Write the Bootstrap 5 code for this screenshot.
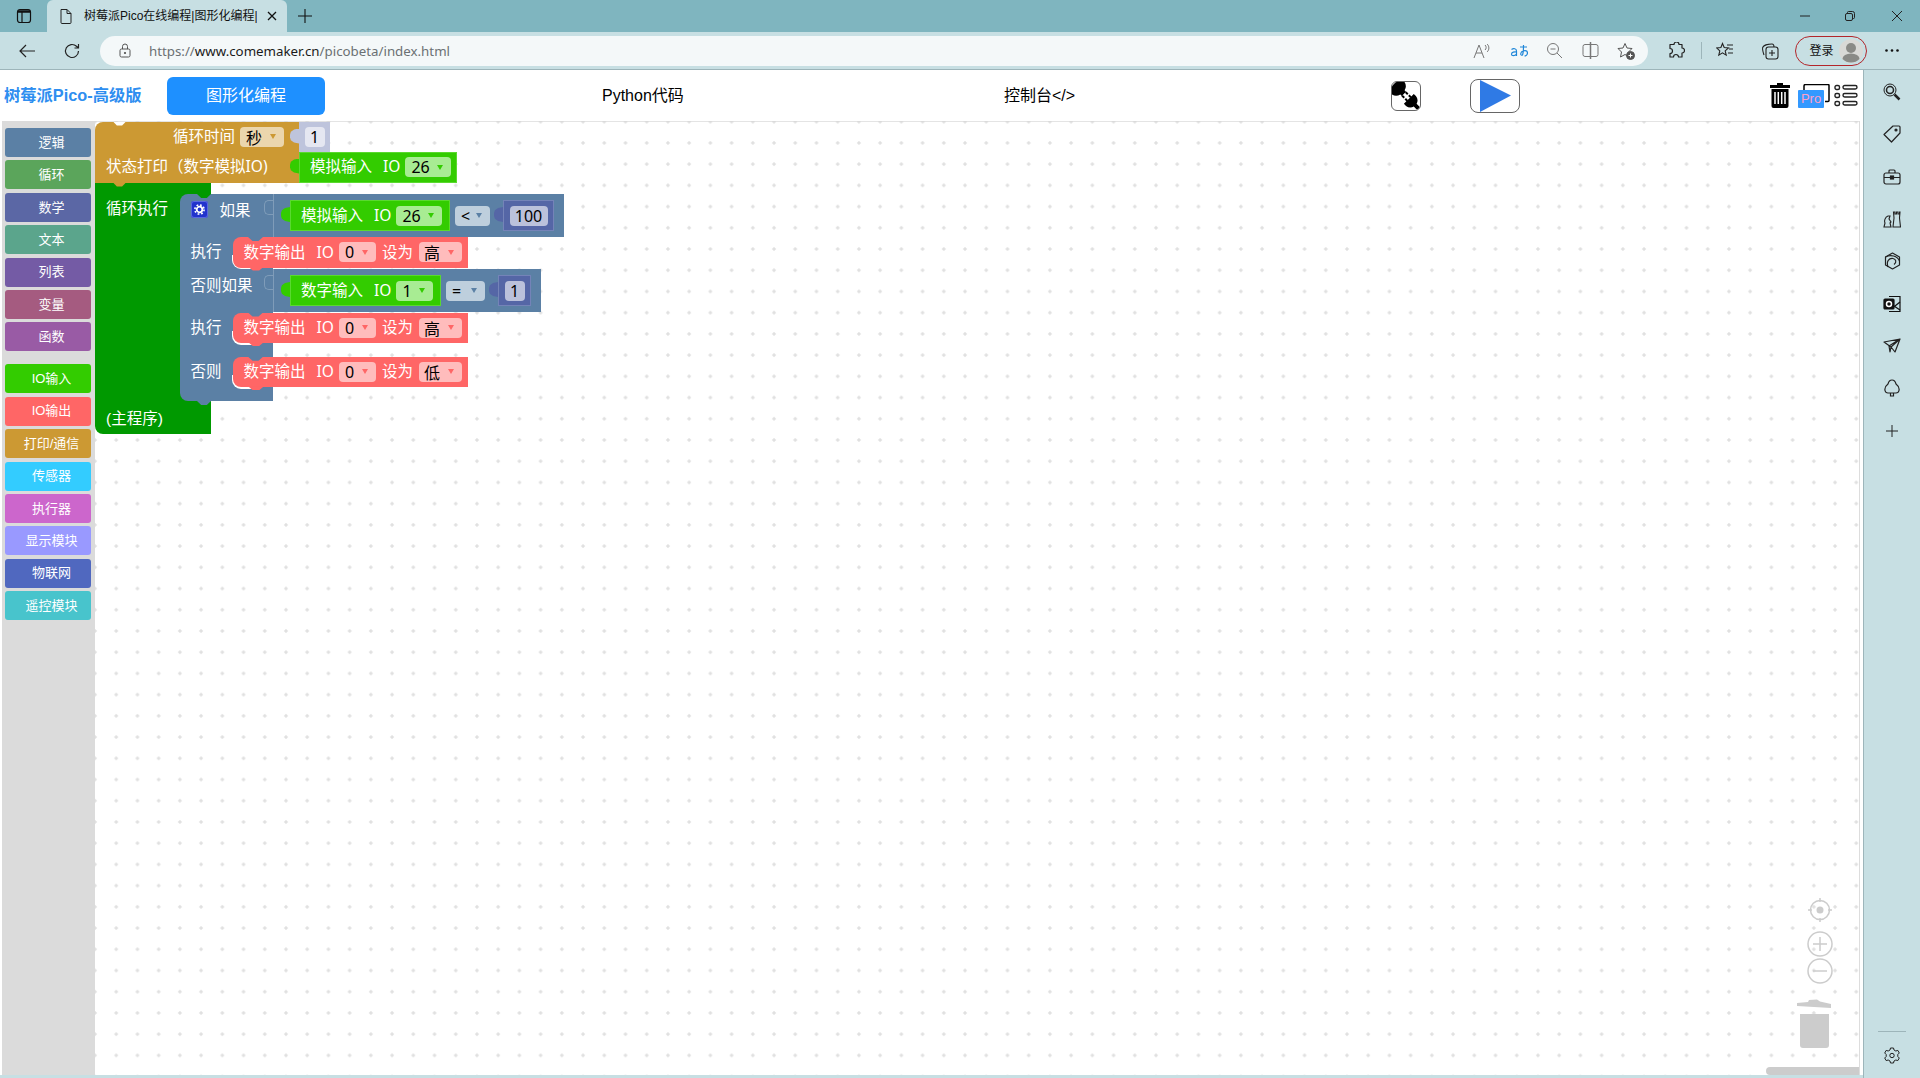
<!DOCTYPE html>
<html lang="zh-CN">
<head>
    <meta charset="UTF-8">
    <meta name="viewport" content="width=device-width, initial-scale=1.0">
    <title>树莓派Pico在线编程</title>
    <link href="https://cdn.jsdelivr.net/npm/bootstrap@5.3.3/dist/css/bootstrap.min.css" rel="stylesheet">
    <style>
        html, body { height: 100%; overflow: hidden; }
        body { background: #c7dfe3; font-family: "Liberation Sans", "Noto Sans CJK SC", sans-serif; }
        svg { display: block; flex: none; }

        /* browser frame */
        .tab-strip { height: 32px; background: #7fb5bf; }
        .win-btn { width: 47px; }
        .browser-tab { width: 240px; height: 32px; background: #c7dfe3; border-radius: 6px 6px 0 0; padding: 0 10px 0 12px; font-size: 12px; color: #111; }
        .tab-doc { margin-right: 11px; }
        .tab-title { width: 173px; overflow: hidden; white-space: nowrap; }
        .tab-plus { margin-left: 11px; }
        .win-ctrls { margin-left: auto; padding-right: 17px; }
        .win-restore { margin: 0 36px 0 35px; }
        .tool-row { height: 38px; padding-left: 19px; border-bottom: 1px solid #9db5ba; }
        .tool-reload { margin: 0 20px 0 29px; }
        .addr-bar { width: 1548px; height: 30px; background: #f4f8f9; border-radius: 15px; padding-left: 19px; font: 13.3px "Noto Sans", sans-serif; color: #6b7073; }
        .addr-lock { margin-right: 18px; }
        .addr-bar b { font-weight: 400; color: #1a1a1a; }
        .addr-right { margin-left: auto; padding-right: 13px; gap: 18.4px; }
        .tool-right { margin-left: 20px; }
        .tool-ext-sep { width: 1px; height: 17px; margin: 0 14px 0 16px; background: #9db5ba; }
        .tool-coll { margin: 0 16px 0 26.5px; }
        .login-pill { width: 72px; height: 30px; border: 1px solid #b3262b; border-radius: 15px; padding: 0 3px 0 14px; font-size: 12px; color: #111; }
        .avatar { width: 24px; height: 24px; margin-left: auto; }
        .tool-more { margin-left: 18px; }

        /* page */
        .body-row { height: 1008px; }
        .page-col { width: 1863px; height: 1005px; padding-left: 2px; background: #fff; }
        .top-menu { height: 51px; background: #fff; }
        .brand-txt { width: 165px; padding-left: 2px; font-size: 16.3px; font-weight: 700; color: #2e8ef0; white-space: nowrap; }
        .mode-btn { width: 158px; height: 38px; background: #1e90ff; color: #fff; border-radius: 6px; font-size: 16px; }
        .mode-link { font-size: 16px; color: #000; white-space: nowrap; }
        .mode-python { width: 82px; margin-left: 277px; }
        .mode-console { margin-left: 320px; width: 72px; }
        .btn-plug { width: 30px; height: 30px; margin-left: 315px; border: 1px solid #666; border-radius: 6px; overflow: hidden; }
        .btn-run { width: 50px; height: 34px; margin-left: 49px; border: 1px solid #666; border-radius: 8px; }
        .top-tools { margin-left: auto; padding-right: 5px; }
        .pro-wrap { position: relative; width: 32px; height: 24px; margin: 0 4px 0 8px; }
        .pro-tag { position: absolute; left: 0; bottom: 0; width: 26px; height: 18px; background: #3399ff; color: #ff9fc8; font-size: 13px; line-height: 18px; text-align: center; border-radius: 1px; }

        .edit-row { height: 954px; }
        .tool-list { width: 93px; background: #dbdbdb; padding: 7px 0 0 3px; }
        .cat-item { width: 86px; height: 29px; margin-bottom: 3.4px; border-radius: 3px; color: #fff; font-size: 13px; padding-left: 7px; white-space: nowrap; }
        .cat-gap { margin-top: 13px; }
        .work-area { position: relative; width: 1765px; overflow: hidden; border-right: 1px solid #ddd; box-shadow: inset 0 1px #e4e4e4; }
        .grid-dots { position: absolute; inset: 0; }

        /* blockly blocks, placed on the free canvas */
        .bk { position: absolute; color: #fff; font-size: 15.5px; line-height: 1; white-space: nowrap; }
        .row-flex { display: flex; align-items: center; }
        .c-orange { background: #cc9933; }
        .c-loop { background: #009900; }
        .c-logic { background: #5b80a5; }
        .c-input { background: #33cc00; box-shadow: inset 0 0 0 1px #5ad92f; }
        .c-output { background: #ff6666; }

        .bk-print { left: 0; top: 0.5px; width: 204px; height: 61px; border-radius: 8px 0 0 0; }
        .bk-print-row1 { height: 30px; justify-content: flex-end; padding-right: 15px; gap: 5px; }
        .bk-print-row2 { height: 31px; padding-left: 11px; }
        .notch-top { position: absolute; top: 0; height: 4px; clip-path: polygon(0 0, 100% 0, 70% 100%, 30% 100%); }
        .nt-print { left: 18px; width: 13px; background: #fff; }
        .nt-if { left: 17px; width: 14px; background: #009900; }
        .nt-red { left: 15px; width: 15px; background: #5b80a5; }
        .notch-bot { position: absolute; height: 4px; clip-path: polygon(0 0, 100% 0, 70% 100%, 30% 100%); }
        .nb-print { left: 18px; width: 13px; bottom: -4px; background: #cc9933; }
        .nb-if { left: 17px; width: 14px; bottom: -4px; background: #5b80a5; }
        .nb-red { left: 15px; width: 16px; bottom: -3px; background: #ff6666; }

        .bk-time { left: 204px; top: 0.5px; width: 31px; height: 30px; background: #bec4dc; justify-content: center; }
        .bk-io26 { left: 204px; top: 30.5px; width: 158px; height: 31px; padding-left: 11px; }
        .bk-loop { left: 0; top: 61px; width: 116px; height: 251.5px; border-radius: 0 0 0 8px; flex-direction: column; align-items: flex-start; justify-content: space-between; padding: 19px 11px 7px; }
        .bk-if { left: 85px; top: 73px; width: 92.5px; height: 207px; border-radius: 8px 0 0 8px; padding-left: 10.5px; }
        .if-r1 { height: 43px; gap: 12px; padding-bottom: 10px; }
        .gear-box { width: 17px; height: 17px; margin-bottom: 3px; background: #2233cc; border-radius: 3px; box-shadow: inset 0 0 0 1px #5a67e0; }
        .if-r2 { height: 30px; }
        .if-r3 { height: 45px; padding-bottom: 8px; }
        .if-r4 { height: 31px; }
        .if-r5 { height: 58px; }
        .bk-ext1 { left: 177.5px; top: 73px; width: 291px; height: 43px; padding-left: 17.5px; box-shadow: inset 1px 0 #7f9cb9; }
        .bk-ext2 { left: 177.5px; top: 148px; width: 268.5px; height: 43px; padding-left: 17.5px; box-shadow: inset 1px 0 #7f9cb9; }
        .tab-ghost { position: absolute; left: -9px; top: 6px; width: 9px; height: 15px; border: 1px solid #7f9cb9; border-right: 0; border-radius: 5px 0 0 5px; }
        .bk-in-a, .bk-in-b { position: relative; height: 31px; padding-left: 11px; }
        .bk-in-a { width: 160px; }
        .bk-in-b { width: 151px; }
        .bk-num { position: relative; height: 31px; background: #5566a6; justify-content: center; box-shadow: inset 0 0 0 1px #7483b8; }
        .num-100 { width: 51px; margin-left: 13px; }
        .num-1 { width: 33px; margin-left: 13px; }
        .op-lt { margin-left: 5px; }
        .op-eq { margin-left: 5px; }
        .bk-red { left: 138px; width: 235px; height: 30.5px; border-radius: 8px 0 0 8px; padding-left: 10.5px; }
        .red-edge { position: absolute; left: 137px; width: 24px; height: 14px; background: #fff; border-radius: 0 0 0 9px; }
        .red-a { top: 116px; }
        .red-b { top: 191.5px; }
        .red-c { top: 235.7px; }
        .edge-a { top: 134px; }
        .edge-b { top: 209.5px; }
        .edge-c { top: 253.7px; }

        .tab-join { position: absolute; left: -9px; top: 7px; width: 9px; height: 15px; clip-path: polygon(100% 0, 45% 6%, 10% 22%, 0 40%, 0 60%, 10% 78%, 45% 94%, 100% 100%); }
        .tj-purple { background: #bec4dc; }
        .tj-green { background: #33cc00; }
        .tj-num { background: #5566a6; }

        .txt-label { margin-right: 11px; }
        .txt-io { margin-right: 5px; font-family: "Noto Sans", sans-serif; }
        .txt-paren { font-family: "Noto Sans", sans-serif; }
        .txt-set { margin: 0 6px; }
        .fld { display: flex; align-items: center; height: 20px; border-radius: 4px; color: #000; font: 16px "Noto Sans", "Noto Sans CJK SC", sans-serif; padding-left: 6px; }
        .fld i { display: block; width: 0; height: 0; margin-left: auto; margin-right: 8px; border: 3.5px solid transparent; border-bottom: 0; border-top: 5px solid currentColor; }
        .fld-time { width: 44px; background: #ebd6ad; }
        .fld-time i { color: #cc9933; }
        .fld-val { width: 20px; justify-content: center; padding: 0; }
        .fld-w20a { background: #e5e7f1; }
        .fld-w20b { background: #bbc1db; }
        .fld-100 { width: 38px; justify-content: center; padding: 0; background: #bbc1db; }
        .fld-io { width: 46px; background: #a8ec93; }
        .fld-io i { color: #33cc00; }
        .fld-io1 { width: 37px; }
        .fld-op { width: 35px; background: #becfdd; }
        .fld-eq { width: 39px; }
        .fld-op i { color: #5b80a5; }
        .fld-pin { width: 37px; background: #ffbcbc; }
        .fld-lev { width: 43px; background: #ffbcbc; padding-left: 5px; }
        .fld-pin i, .fld-lev i { color: #ff6666; }

        /* workspace controls */
        .zoom-ctrl { position: absolute; left: 1702px; top: 777px; }
        .ws-scroll { position: absolute; right: 0; bottom: 0; width: 93px; height: 8px; background: #ccc; border-radius: 4px 0 0 4px; }

        /* edge rail */
        .side-rail { width: 57px; height: 1008px; border-left: 1px solid #9db5ba; padding: 1px 0 14px; }
        .rail-ico { height: 42.3px; }
        .rail-sep { width: 28px; height: 1px; background: #9db5ba; margin: auto 0 15px; }
    </style>
</head>
<body>

    <!-- Tab strip -->
    <div class="tab-strip d-flex align-items-center">
        <div class="win-btn d-flex justify-content-center">
            <svg width="16" height="16" viewBox="0 0 16 16" fill="none" stroke="#111" stroke-width="1.2"><rect x="1.5" y="1.5" width="13" height="13" rx="2.5"/><path d="M2 3.5h12" stroke-width="2.5"/><path d="M6 4v10"/></svg>
        </div>
        <div class="browser-tab d-flex align-items-center">
            <svg class="tab-doc" width="14" height="16" viewBox="0 0 14 16" fill="none" stroke="#222"><path d="M2 1.5h6l4 4v9a1 1 0 0 1-1 1H3a1 1 0 0 1-1-1z"/><path d="M8 1.5v4h4"/></svg>
            <span class="tab-title">树莓派Pico在线编程|图形化编程|</span>
            <svg class="ms-auto" width="10" height="10" viewBox="0 0 10 10" stroke="#111" stroke-width="1.3"><path d="M1 1l8 8M9 1l-8 8"/></svg>
        </div>
        <svg class="tab-plus" width="14" height="14" viewBox="0 0 14 14" stroke="#111" stroke-width="1.1"><path d="M7 0v14M0 7h14"/></svg>
        <div class="win-ctrls d-flex align-items-center">
            <svg width="10" height="10" viewBox="0 0 10 10" stroke="#222"><path d="M0 5h10"/></svg>
            <svg class="win-restore" width="10" height="10" viewBox="0 0 10 10" fill="none" stroke="#222"><rect x=".5" y="2.5" width="7" height="7" rx="1.5"/><path d="M2.5 2.5v-1a1 1 0 0 1 1-1h4a2 2 0 0 1 2 2v4a1 1 0 0 1-1 1h-1"/></svg>
            <svg width="12" height="12" viewBox="0 0 12 12" stroke="#222"><path d="M1 1l10 10M11 1L1 11"/></svg>
        </div>
    </div>

    <!-- Toolbar -->
    <div class="tool-row d-flex align-items-center">
        <svg width="16" height="14" viewBox="0 0 16 14" fill="none" stroke="#222" stroke-width="1.2"><path d="M16 7H1M7 1L1 7l6 6"/></svg>
        <svg class="tool-reload" width="16" height="16" viewBox="0 0 16 16" fill="none" stroke="#222" stroke-width="1.2"><path d="M14.5 8a6.5 6.5 0 1 1-2-4.7L14.5 5M14.5 1v4h-4"/></svg>
        <div class="addr-bar d-flex align-items-center">
            <svg class="addr-lock" width="12" height="15" viewBox="0 0 12 15" fill="none" stroke="#555"><rect x="1" y="6" width="10" height="8" rx="1.5"/><path d="M3.5 6V3.5a2.5 2.5 0 0 1 5 0V6"/><circle cx="6" cy="10" r=".7" fill="#555"/></svg>
            <span>https://<b>www.comemaker.cn</b>/picobeta/index.html</span>
            <div class="addr-right d-flex align-items-center">
                <svg width="18" height="16" viewBox="0 0 18 16" fill="none" stroke="#777"><path d="M1 15L6 2l5 13M3 10h6M12 2c1.5 1 1.500 4 0 5M14 1c2.500 2 2.500 6 0 8"/></svg>
                <svg width="18" height="14" viewBox="0 0 18 14" fill="none" stroke="#1f86d8" stroke-width="1.2"><path d="M1.500 5.500c2-1.500 5-1 5 1.500v5M6.500 8c-2-.5-5 0-5 2.200 0 2 3.500 2 5 0M10 3h7M13.500 1c0 4 0 8-1 10-1.500 1-2.500-1-1-3 2-2 6-2 6 1 0 2-2 3-3 3"/></svg>
                <svg width="17" height="17" viewBox="0 0 17 17" fill="none" stroke="#777"><circle cx="7" cy="7" r="5.5"/><path d="M4.500 7h5M11 11l5 5"/></svg>
                <svg width="17" height="17" viewBox="0 0 17 17" fill="none" stroke="#777"><rect x="1" y="2.500" width="15" height="12" rx="2"/><path d="M8.500 0v17" stroke-width="1.5"/></svg>
                <svg width="18" height="18" viewBox="0 0 18 18" fill="none" stroke="#555"><path d="M8 1.500l2 4.500 5 .5-3.500 3.500 1 5L8 12.500 3.500 15l1-5L1 6.500 6 6z"/><circle cx="13.500" cy="13.500" r="4" fill="#555"/><path d="M13.500 11.500v4M11.500 13.500h4" stroke="#fff"/></svg>
            </div>
        </div>
        <div class="tool-right d-flex align-items-center">
            <svg width="17" height="17" viewBox="0 0 17 17" fill="none" stroke="#222" stroke-width="1.2"><path d="M6 2.500a2.500 2.500 0 0 1 5 0h3V6a2.500 2.500 0 0 1 0 5v4h-3.500a2.500 2.500 0 0 0-5 0H2v-3.500a2.500 2.500 0 0 0 0-5v-4z" stroke-linejoin="round"/></svg>
            <span class="tool-ext-sep"></span>
            <svg width="18" height="17" viewBox="0 0 18 17" fill="none" stroke="#222" stroke-width="1.1"><path d="M6.500 1.500l1.700 4 4.300.4-3.300 3 1 4.300-3.700-2.300-3.700 2.300 1-4.300L.6 5.900l4.300-.4zM11 3h6M13 7h4M12 11h5"/></svg>
            <svg class="tool-coll" width="18" height="18" viewBox="0 0 18 18" fill="none" stroke="#222" stroke-width="1.1"><rect x="5" y="5" width="12" height="12" rx="2.500"/><path d="M11 8v6M8 11h6M3 13c-1-3-2-7-1-8 1-2 6-3 9-3 1 0 2 1 2 3"/></svg>
            <div class="login-pill d-flex align-items-center">
                <span>登录</span>
                <svg class="avatar" viewBox="0 0 24 24"><circle cx="12" cy="12" r="12" fill="#d9d9d6"/><circle cx="12" cy="9" r="5" fill="#8a8a86"/><path d="M3.500 20a8.500 5.500 0 0 1 17 0 12 12 0 0 1-17 0z" fill="#8a8a86"/></svg>
            </div>
            <svg class="tool-more" width="14" height="3" viewBox="0 0 14 3" fill="#111"><circle cx="1.5" cy="1.5" r="1.3"/><circle cx="7" cy="1.5" r="1.3"/><circle cx="12.5" cy="1.5" r="1.3"/></svg>
        </div>
    </div>

    <div class="body-row d-flex">
        <div class="page-col d-flex flex-column">
            <!-- Main menu -->
            <div class="top-menu d-flex align-items-center">
                <span class="brand-txt">树莓派Pico-高级版</span>
                <span class="mode-btn d-flex align-items-center justify-content-center">图形化编程</span>
                <span class="mode-link mode-python">Python代码</span>
                <span class="mode-link mode-console">控制台&lt;/&gt;</span>
                <span class="btn-plug d-flex">
                    <svg width="28" height="28" viewBox="0 0 28 28"><g transform="rotate(-45 14 14)" fill="#000"><path d="M5 -3h18v5a8 8 0 0 1-6 7v2h-6V9a8 8 0 0 1-6-7z"/><rect x="10.5" y="11" width="2" height="3"/><rect x="15.5" y="11" width="2" height="3"/><rect x="10.5" y="15.5" width="2" height="3"/><rect x="15.5" y="15.5" width="2" height="3"/><path d="M7 18h14v3a7 7 0 0 1-5 6v6h-4v-6a7 7 0 0 1-5-6z"/></g></svg>
                </span>
                <span class="btn-run d-flex align-items-center">
                    <svg class="ms-2" width="33" height="32" viewBox="0 0 33 32"><path d="M1 0l31 15.500L1 32z" fill="#2f7ae5"/></svg>
                </span>
                <div class="top-tools d-flex align-items-center">
                    <svg width="20" height="25" viewBox="0 0 20 25"><path d="M7 0h6v2h7v3H0V2h7z" fill="#000"/><path d="M1.500 6h17v17a2 2 0 0 1-2 2h-13a2 2 0 0 1-2-2z" fill="#000"/><path d="M5 9v12M8.300 9v12M11.700 9v12M15 9v12" stroke="#fff" stroke-width="1.5"/></svg>
                    <div class="pro-wrap">
                        <svg width="32" height="24" viewBox="0 0 32 24" fill="none"><path d="M6 6V2A1.500 1.500 0 0 1 7.500.5H30a1 1 0 0 1 1 1v15a1 1 0 0 1-1 1h-3" stroke="#000" stroke-width="1.5"/></svg>
                        <span class="pro-tag">Pro</span>
                    </div>
                    <svg width="24" height="23" viewBox="0 0 24 23" fill="none" stroke="#222" stroke-width="1.4"><rect x="1" y="1.500" width="4.500" height="4" rx="1.500"/><rect x="1" y="9.500" width="4.500" height="4" rx="1.500"/><rect x="1" y="17.500" width="4.500" height="4" rx="1.500"/><rect x="9" y="1.500" width="14" height="3.500" rx="1.700"/><rect x="9" y="9.500" width="14" height="3.500" rx="1.700"/><rect x="9" y="17.500" width="14" height="3.500" rx="1.700"/></svg>
                </div>
            </div>

            <div class="edit-row d-flex">
                <!-- Block categories -->
                <div class="tool-list flex-shrink-0" id="catList"></div>

                <!-- Workspace -->
                <div class="work-area">
                    <svg class="grid-dots" width="100%" height="100%">
                        <defs>
                            <pattern id="dots" x="-10.61" y="-9.9" width="21.22" height="21.22" patternUnits="userSpaceOnUse">
                                <path d="M8.61 10.61h4M10.61 8.61v4" stroke="#d6d6d6" stroke-width="1"/>
                            </pattern>
                        </defs>
                        <rect width="100%" height="100%" fill="url(#dots)"/>
                    </svg>

                    <div class="bk bk-loop c-loop d-flex">
                        <span>循环执行</span>
                        <span>(主程序)</span>
                    </div>

                    <div class="bk bk-print c-orange">
                        <div class="bk-print-row1 row-flex">
                            <span>循环时间</span>
                            <span class="fld fld-time">秒<i></i></span>
                        </div>
                        <div class="bk-print-row2 row-flex">状态打印（数字模拟<span class="txt-paren">IO)</span></div>
                        <span class="notch-top nt-print"></span>
                        <span class="notch-bot nb-print"></span>
                    </div>
                    <div class="bk bk-time row-flex">
                        <span class="tab-join tj-purple"></span>
                        <span class="fld fld-val fld-w20a">1</span>
                    </div>
                    <div class="bk bk-io26 c-input row-flex">
                        <span class="tab-join tj-green"></span>
                        <span class="txt-label">模拟输入</span><span class="txt-io">IO</span>
                        <span class="fld fld-io">26<i></i></span>
                    </div>

                    <div class="bk bk-if c-logic">
                        <div class="if-r1 row-flex">
                            <span class="gear-box d-flex align-items-center justify-content-center">
                                <svg width="13" height="13" viewBox="0 0 13 13" fill="none" stroke="#fff"><circle cx="6.5" cy="6.5" r="2.8" stroke-width="1.8"/><circle cx="6.5" cy="6.5" r="4.6" stroke-width="1.6" stroke-dasharray="1.8 1.81"/></svg>
                            </span>
                            <span>如果</span>
                        </div>
                        <div class="if-r2 row-flex">执行</div>
                        <div class="if-r3 row-flex">否则如果</div>
                        <div class="if-r4 row-flex">执行</div>
                        <div class="if-r5 row-flex">否则</div>
                        <span class="notch-top nt-if"></span>
                        <span class="notch-bot nb-if"></span>
                    </div>

                    <div class="bk bk-ext1 c-logic row-flex">
                        <span class="tab-ghost"></span>
                        <div class="bk-in-a c-input row-flex">
                            <span class="tab-join tj-green"></span>
                            <span class="txt-label">模拟输入</span><span class="txt-io">IO</span>
                            <span class="fld fld-io">26<i></i></span>
                        </div>
                        <span class="fld fld-op op-lt">&lt;<i></i></span>
                        <div class="bk-num num-100 row-flex">
                            <span class="tab-join tj-num"></span>
                            <span class="fld fld-100">100</span>
                        </div>
                    </div>

                    <div class="red-edge edge-a"></div>
                    <div class="bk bk-red red-a c-output row-flex">
                        <span class="txt-label">数字输出</span><span class="txt-io">IO</span>
                        <span class="fld fld-pin">0<i></i></span>
                        <span class="txt-set">设为</span>
                        <span class="fld fld-lev">高<i></i></span>
                        <span class="notch-top nt-red"></span>
                        <span class="notch-bot nb-red"></span>
                    </div>

                    <div class="bk bk-ext2 c-logic row-flex">
                        <span class="tab-ghost"></span>
                        <div class="bk-in-b c-input row-flex">
                            <span class="tab-join tj-green"></span>
                            <span class="txt-label">数字输入</span><span class="txt-io">IO</span>
                            <span class="fld fld-io fld-io1">1<i></i></span>
                        </div>
                        <span class="fld fld-op fld-eq op-eq">=<i></i></span>
                        <div class="bk-num num-1 row-flex">
                            <span class="tab-join tj-num"></span>
                            <span class="fld fld-val fld-w20b">1</span>
                        </div>
                    </div>

                    <div class="red-edge edge-b"></div>
                    <div class="bk bk-red red-b c-output row-flex">
                        <span class="txt-label">数字输出</span><span class="txt-io">IO</span>
                        <span class="fld fld-pin">0<i></i></span>
                        <span class="txt-set">设为</span>
                        <span class="fld fld-lev">高<i></i></span>
                        <span class="notch-top nt-red"></span>
                        <span class="notch-bot nb-red"></span>
                    </div>

                    <div class="red-edge edge-c"></div>
                    <div class="bk bk-red red-c c-output row-flex">
                        <span class="txt-label">数字输出</span><span class="txt-io">IO</span>
                        <span class="fld fld-pin">0<i></i></span>
                        <span class="txt-set">设为</span>
                        <span class="fld fld-lev">低<i></i></span>
                        <span class="notch-top nt-red"></span>
                        <span class="notch-bot nb-red"></span>
                    </div>

                    <svg class="zoom-ctrl" width="44" height="160" viewBox="0 0 44 160" fill="none" stroke="#ccc" stroke-width="1.5">
                        <circle cx="23" cy="12" r="9.5"/>
                        <circle cx="23" cy="12" r="3.5" fill="#ccc" stroke="none"/>
                        <path d="M23 0v4M23 20v4M11 12h4M31 12h4"/>
                        <circle cx="23" cy="46" r="12"/>
                        <path d="M23 39v14M16 46h14"/>
                        <circle cx="23" cy="73" r="12"/>
                        <path d="M16 73h14"/>
                        <path d="M0 105l11-1 1-2 8-.5 3 2 11 2.500v4L0 108z" fill="#ccc" stroke="none"/>
                        <path d="M3 116h29v31a3 3 0 0 1-3 3H6a3 3 0 0 1-3-3z" fill="#ccc" stroke="none"/>
                    </svg>
                    <div class="ws-scroll"></div>
                </div>
            </div>
        </div>

        <!-- Edge sidebar -->
        <div class="side-rail d-flex flex-column align-items-center">
            <div class="rail-ico d-flex align-items-center"><svg width="18" height="18" viewBox="0 0 18 18" fill="none" stroke="#222"><circle cx="7" cy="7" r="6"/><circle cx="7" cy="7" r="3.5" stroke-width="1.5"/><path d="M11.500 11.500l5 5" stroke-width="2.5"/></svg></div>
            <div class="rail-ico d-flex align-items-center"><svg width="18" height="18" viewBox="0 0 18 18" fill="none" stroke="#222" stroke-width="1.2"><path d="M10 1h6a1 1 0 0 1 1 1v6l-8.500 9L1 9.500z" stroke-linejoin="round"/><circle cx="13" cy="5" r="1" fill="#222"/></svg></div>
            <div class="rail-ico d-flex align-items-center"><svg width="18" height="16" viewBox="0 0 18 16" fill="none" stroke="#222" stroke-width="1.2"><rect x="1" y="4" width="16" height="11" rx="2"/><path d="M6 4V2a1 1 0 0 1 1-1h4a1 1 0 0 1 1 1v2M1 8.500h16"/><rect x="7.500" y="7" width="3" height="3" fill="#222"/></svg></div>
            <div class="rail-ico d-flex align-items-center"><svg width="18" height="17" viewBox="0 0 18 17" fill="none" stroke="#222" stroke-width="1.1"><path d="M10.500 1H12v2h1.500V1H15v2h1.500V1h.5l-.5 6 1 9H10l1-9zM1 16l1-4c-1-2 0-6 3-7h2L6 8l2 3-1 1 1 4z"/></svg></div>
            <div class="rail-ico d-flex align-items-center"><svg width="17" height="18" viewBox="0 0 17 18" fill="none" stroke="#222" stroke-width="1.2"><path d="M8.500 1l7 4v8l-7 4-7-4V5z" stroke-linejoin="round"/><path d="M1.500 5c5-3 12-1 14 4M4 15c-2-6 1-9 5-8.500 3 .5 4 4 1 6"/></svg></div>
            <div class="rail-ico d-flex align-items-center"><svg width="18" height="18" viewBox="0 0 18 18" fill="none" stroke="#111" stroke-width="1.2"><path d="M6 1.500h11v15H6"/><path d="M8 9l9 6M17 7l-5 4"/><rect x="1" y="4" width="10" height="10" rx="1" fill="#111"/><circle cx="6" cy="9" r="2.5" stroke="#fff" stroke-width="1.5"/></svg></div>
            <div class="rail-ico d-flex align-items-center"><svg width="18" height="15" viewBox="0 0 18 15" fill="none" stroke="#222" stroke-width="1.2"><path d="M1 4l16-3-5 13-4-5zM17 1L8 9l-1 5-1-6z" stroke-linejoin="round"/></svg></div>
            <div class="rail-ico d-flex align-items-center"><svg width="16" height="18" viewBox="0 0 16 18" fill="none" stroke="#222" stroke-width="1.2"><path d="M8 1C6 1 4.500 3 4 5c-2 1.500-3.500 4-3 6.500C1.300 13 3 14 4 14h8c1 0 2.700-1 3-2.500.5-2.500-1-5-3-6.500C11.500 3 10 1 8 1zM6.500 14v3h3v-3"/></svg></div>
            <div class="rail-ico d-flex align-items-center"><svg width="14" height="14" viewBox="0 0 14 14" stroke="#222" stroke-width="1"><path d="M7 1v12M1 7h12"/></svg></div>
            <div class="rail-sep"></div>
            <svg width="16" height="17" viewBox="0 0 16 17" fill="none" stroke="#222"><circle cx="8" cy="8.500" r="2.200"/><path d="M6.500 1h3l.5 2 1.800 1 2-.6L15.300 6l-1.500 1.500v2L15.300 11l-1.500 2.600-2-.6-1.800 1-.5 2h-3l-.5-2-1.800-1-2 .6L.7 11l1.500-1.500v-2L.7 6l1.500-2.600 2 .6L6 3z" stroke-linejoin="round"/></svg>
        </div>
    </div>

    <script src="https://cdn.jsdelivr.net/npm/bootstrap@5.3.3/dist/js/bootstrap.bundle.min.js"></script>
    <script>
        // Categorias del panel izquierdo
        const cats = [
            ['逻辑', '#5b80a5'], ['循环', '#5ba55b'], ['数学', '#5b67a5'], ['文本', '#5ba58c'],
            ['列表', '#745ba5'], ['变量', '#a55b80'], ['函数', '#995ba5'],
            ['IO输入', '#33cc00', 'cat-gap'], ['IO输出', '#ff6666'], ['打印/通信', '#cc9933'],
            ['传感器', '#33ccff'], ['执行器', '#cc66cc'], ['显示模块', '#9999ff'],
            ['物联网', '#5068bf'], ['遥控模块', '#48c4cc']
        ];
        const catList = document.getElementById('catList');
        cats.forEach(c => {
            const el = document.createElement('div');
            el.className = 'cat-item d-flex align-items-center justify-content-center ' + (c[2] || '');
            el.style.background = c[1];
            el.textContent = c[0];
            catList.appendChild(el);
        });
    </script>
</body>
</html>
